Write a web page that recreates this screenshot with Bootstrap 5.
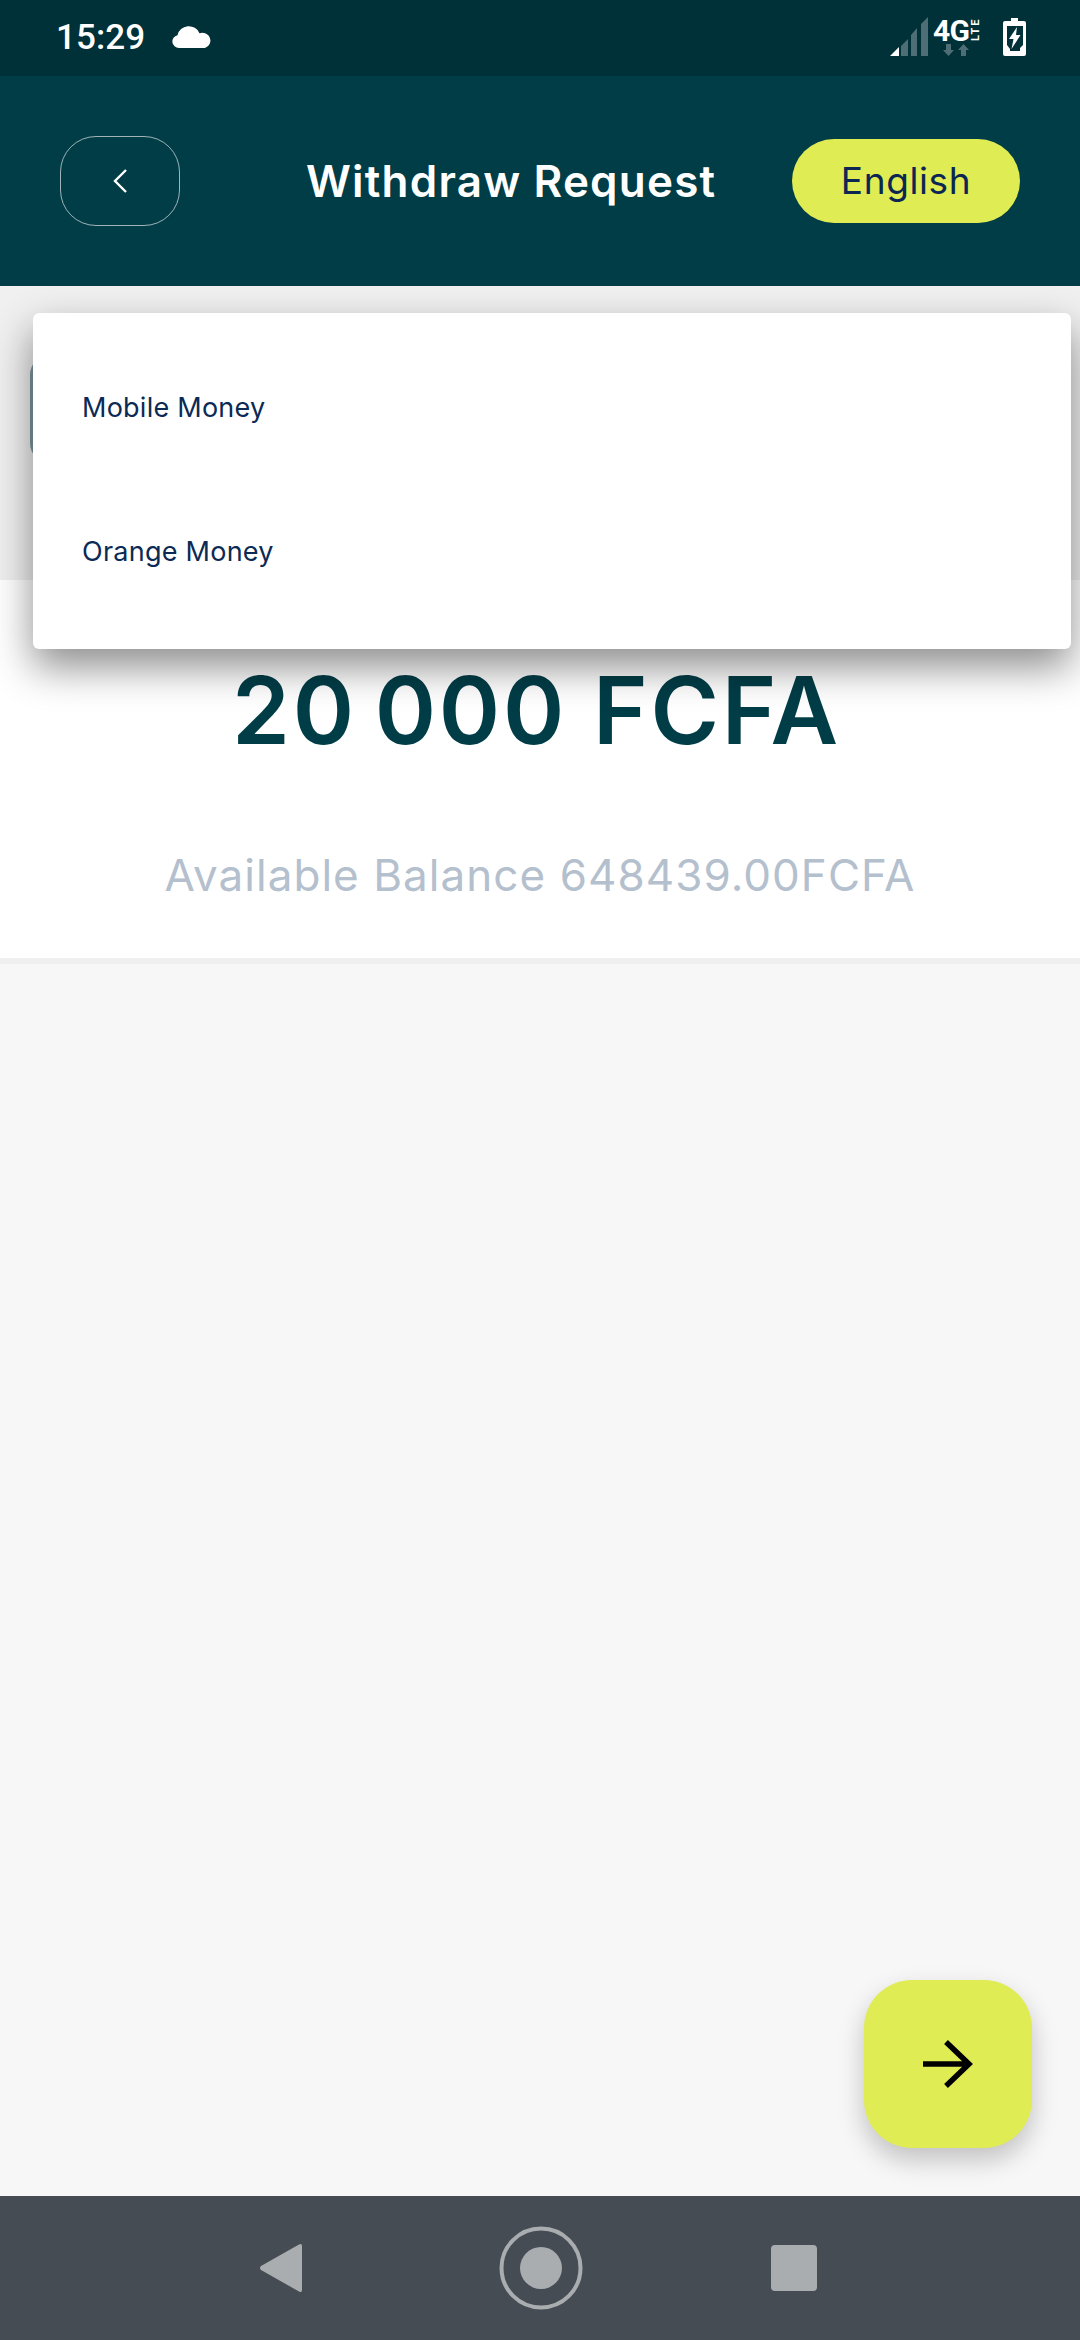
<!DOCTYPE html>
<html lang="en">
<head>
    <meta charset="UTF-8">
    <meta name="viewport" content="width=device-width, initial-scale=1.0">
    <title>Withdraw Request</title>
    <link href="https://cdn.jsdelivr.net/npm/bootstrap@5.3.0/dist/css/bootstrap.min.css" rel="stylesheet">
    <style>
        html, body { height: 100%; }
        body {
            width: 1080px;
            height: 2340px;
            overflow: hidden;
            font-family: Inter, "Liberation Sans", sans-serif;
            background: #f7f7f7;
        }
        .status-strip {
            height: 76px;
            background: #003038;
            padding: 0 54px 0 56px;
            font-family: Roboto, sans-serif;
            font-size: 35px;
            font-weight: 500;
            color: #fff;
        }
        .status-time { width: 87px; letter-spacing: .1px; white-space: nowrap; }
        .status-cloud { margin-left: 28px; margin-bottom: 3px; }
        .status-battery { margin-left: 18px; margin-bottom: 2px; }
        .app-header {
            height: 210px;
            background: #003d47;
            padding: 0 60px;
        }
        .back-btn {
            width: 120px;
            height: 90px;
            border: 1.5px solid #9fb4b8;
            border-radius: 36px;
            background: transparent;
            padding: 0;
        }
        .page-title {
            margin: 0 0 0 126px;
            font-size: 44px;
            line-height: 50px;
            font-weight: 600;
            letter-spacing: 1.2px;
            color: #fff;
            white-space: nowrap;
        }
        .lang-btn {
            width: 228px;
            height: 84px;
            border: 0;
            border-radius: 42px;
            background: #e0ec54;
            color: #0b2652;
            font-size: 37px;
            letter-spacing: .6px;
            padding: 0;
        }
        .method-zone {
            height: 294px;
            background: #f0f0f0;
            padding: 69px 0 0 30px;
        }
        .method-input {
            width: 1020px;
            height: 108px;
            background: #fff;
            border: 3px solid #7f9a9f;
            border-radius: 20px;
        }
        .method-menu {
            top: 313px;
            left: 33px;
            width: 1038px;
            height: 336px;
            margin: 0;
            padding: 23px 0 0;
            border: 0;
            border-radius: 6px;
            box-shadow: 0 18px 40px rgba(0, 0, 0, .45);
        }
        .method-menu .dropdown-item {
            height: 144px;
            padding: 0 0 0 49px;
            font-size: 27px;
            letter-spacing: .25px;
            color: #0b2a55;
        }
        .amount-zone {
            height: 378px;
            background: #fff;
            padding-top: 74px;
        }
        .amount-value {
            padding-right: 7px;
            font-size: 93px;
            line-height: 112px;
            font-weight: 600;
            letter-spacing: 2.7px;
            color: #003d47;
            white-space: nowrap;
        }
        .balance-value {
            margin-top: 83px;
            font-size: 44px;
            line-height: 52px;
            letter-spacing: 1.05px;
            color: #b4c0cd;
            white-space: nowrap;
        }
        .zone-rule { height: 6px; background: #efefef; }
        .empty-zone { height: 1232px; background: #f7f7f7; }
        .next-fab {
            right: 48px;
            top: 1980px;
            width: 168px;
            height: 168px;
            padding: 0;
            border: 0;
            border-radius: 48px;
            background: #e0ec54;
            box-shadow: 0 12px 26px rgba(0, 0, 0, .22);
        }
        .sys-nav {
            height: 144px;
            background: #454c53;
            padding-left: 259px;
        }
        .nav-home { margin-left: 196px; }
        .nav-recent { margin-left: 188px; }
    </style>
</head>
<body class="position-relative">
    <!-- Barra de estado -->
    <div class="status-strip d-flex align-items-center">
        <span class="status-time">15:29</span>
        <svg class="status-cloud" width="42" height="23" viewBox="0 0 42 24" preserveAspectRatio="none"><path d="M8 24a6.800 6.800 0 0 1-1.500-13.400A11.500 11.500 0 0 1 28.500 8.500a8 8 0 0 1 5.500 15.500z" fill="#fff"/></svg>
        <svg class="ms-auto" width="100" height="76" viewBox="885 0 100 76">
            <path d="M890 56 899 47V56z" fill="#fff"/>
            <path d="M901 46 908 39V56H901zM911 35 917 28V56H911zM921 24 928 17V56H921z" fill="#fff" opacity=".3"/>
            <text x="933" y="41" font-family="Roboto, sans-serif" font-size="30" font-weight="700" fill="#fff" letter-spacing="-.8">4G</text>
            <text transform="translate(979 41) rotate(-90)" font-family="Roboto, sans-serif" font-size="11" font-weight="700" fill="#fff" letter-spacing="1.800">LTE</text>
            <path d="M946 44h5v6h3l-5.500 6-5.500-6h3zM961 56h5v-6h3l-5.500-6-5.500 6h3z" fill="#fff" opacity=".3"/>
        </svg>
        <svg class="status-battery" width="23" height="38" viewBox="0 0 23 38"><path fill-rule="evenodd" d="M8 0h7v3h6a2 2 0 0 1 2 2v31a2 2 0 0 1-2 2H2a2 2 0 0 1-2-2V5a2 2 0 0 1 2-2h6zM4 8v19l3 4v2h10v-3l3-3V8zM14 9 6 21h4.500l-2 10 9-14h-4.500z" fill="#fff"/></svg>
    </div>

    <!-- Encabezado -->
    <header class="app-header d-flex align-items-center">
        <button class="back-btn d-flex align-items-center justify-content-center" type="button">
            <svg width="16" height="26" viewBox="0 0 16 26"><path d="M14 2 3 13l11 11" fill="none" stroke="#fff" stroke-width="2.400"/></svg>
        </button>
        <h1 class="page-title">Withdraw Request</h1>
        <button class="lang-btn ms-auto" type="button">English</button>
    </header>

    <!-- Campo detras del menu -->
    <div class="method-zone">
        <div class="method-input"></div>
    </div>

    <!-- Menu desplegable -->
    <ul class="dropdown-menu show position-absolute method-menu">
        <li><a class="dropdown-item d-flex align-items-center" href="#">Mobile Money</a></li>
        <li><a class="dropdown-item d-flex align-items-center" href="#">Orange Money</a></li>
    </ul>

    <!-- Monto -->
    <section class="amount-zone text-center">
        <div class="amount-value">20&#8201;000 FCFA</div>
        <div class="balance-value">Available Balance 648439.00FCFA</div>
    </section>
    <div class="zone-rule"></div>
    <div class="empty-zone"></div>

    <button class="next-fab position-absolute d-flex align-items-center justify-content-center" type="button">
        <svg width="50" height="48" viewBox="0 0 50 48"><path d="M0 24h47M23 2l23 22-23 22" fill="none" stroke="#000" stroke-width="5.500"/></svg>
    </button>

    <!-- Navegacion del sistema -->
    <nav class="sys-nav d-flex align-items-center">
        <svg width="44" height="50" viewBox="0 0 44 50"><path d="M43 3v44q0 3-3 1.500L2 27q-2-2 0-4L40 1.500q3-1.500 3 1.500z" fill="#a9adb0"/></svg>
        <svg class="nav-home" width="84" height="84" viewBox="0 0 84 84"><circle cx="42" cy="42" r="39.500" fill="none" stroke="#a9adb0" stroke-width="4"/><circle cx="42" cy="42" r="21" fill="#a9adb0"/></svg>
        <svg class="nav-recent" width="46" height="46" viewBox="0 0 46 46"><rect width="46" height="46" rx="4" fill="#a9adb0"/></svg>
    </nav>

    <script src="https://cdn.jsdelivr.net/npm/bootstrap@5.3.0/dist/js/bootstrap.bundle.min.js"></script>
</body>
</html>
